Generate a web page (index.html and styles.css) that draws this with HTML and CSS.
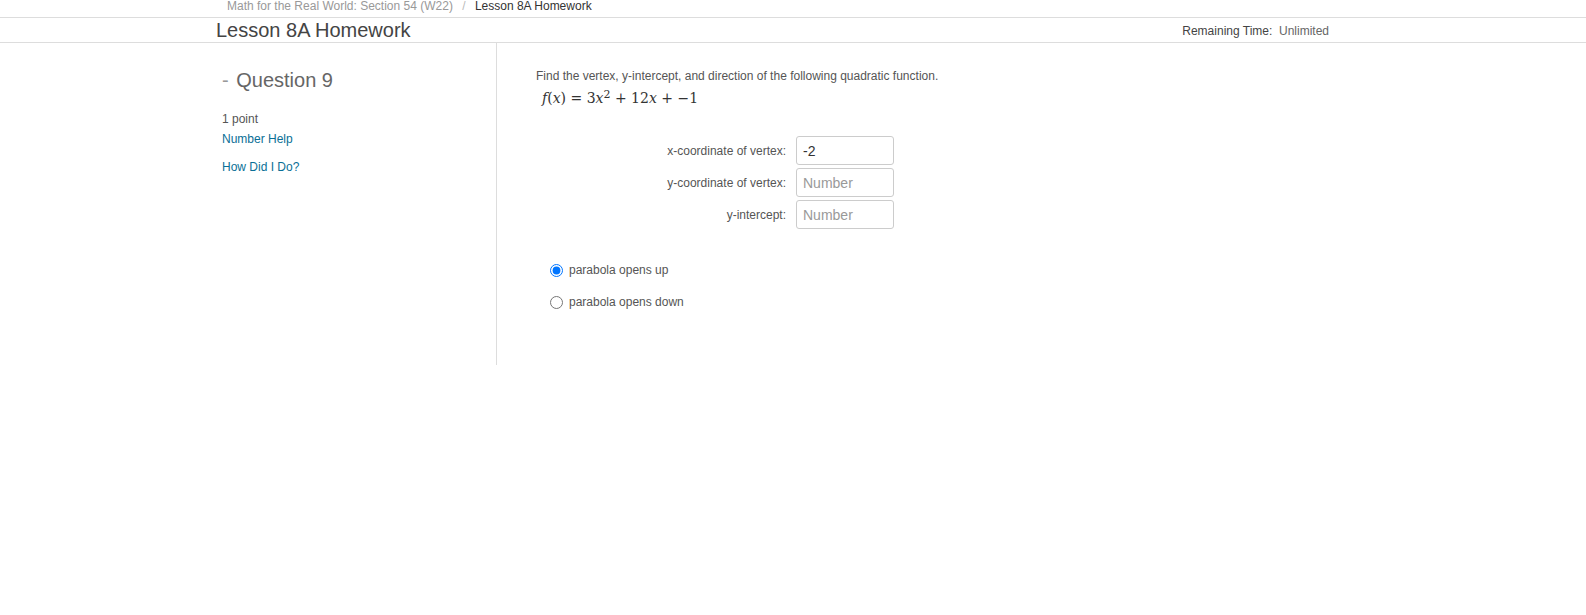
FILE: index.html
```html
<!DOCTYPE html>
<html>
  <head>
    <meta name="viewport" content="width=device-width, initial-scale=1.0" />
    <link rel="stylesheet" href="styles.css">
  </head>
  <body>
    <div class="breadcrumb">
      <span class="crumb">Math for the Real World: Section 54 (W22)</span>
      <span class="sep">/</span>
      <span class="crumb current">Lesson 8A Homework</span>
    </div>

    <div class="titlebar">
      <div class="container bar-inner">
        <h1>Lesson 8A Homework</h1>
        <div class="timer">Remaining Time:&nbsp; <span>Unlimited</span></div>
      </div>
    </div>

    <div class="container main">
      <div class="sidebar">
        <h2><span class="dash">-</span> Question 9</h2>
        <div class="points">1 point</div>
        <a class="help" href="#">Number Help</a>
        <a class="help how" href="#">How Did I Do?</a>
      </div>

      <div class="question">
        <p class="prompt">Find the vertex, y-intercept, and direction of the following quadratic function.</p>
        <div class="math">
          <i>f</i>(<i>x</i>) = 3<i>x</i><sup>2</sup> + 12<i>x</i> + &minus;1
        </div>

        <div class="fields">
          <label class="field">
            <span>x-coordinate of vertex:</span>
            <input type="text" value="-2" />
          </label>
          <label class="field">
            <span>y-coordinate of vertex:</span>
            <input type="text" placeholder="Number" />
          </label>
          <label class="field">
            <span>y-intercept:</span>
            <input type="text" placeholder="Number" />
          </label>
        </div>

        <div class="choices">
          <label class="choice">
            <input type="radio" name="dir" checked />
            parabola opens up
          </label>
          <label class="choice">
            <input type="radio" name="dir" />
            parabola opens down
          </label>
        </div>
      </div>
    </div>
  </body>
</html>
```

FILE: styles.css
```css
* {
  box-sizing: border-box;
  margin: 0;
  padding: 0;
}

body {
  font-family: "Liberation Sans", Arial, sans-serif;
  font-size: 12px;
  color: #555;
  background: white;
}

.container {
  width: 1113px;
  margin-left: 216px;
}

.breadcrumb {
  height: 17px;
  padding-left: 227px;
  line-height: 13px;
  color: #999;
}

.breadcrumb .sep {
  margin: 0 6px;
  color: #bbb;
}

.breadcrumb .current {
  color: #333;
}

.titlebar {
  border-top: 1px solid #ddd;
  border-bottom: 1px solid #ddd;
  height: 26px;
}

.bar-inner {
  display: flex;
  justify-content: space-between;
  align-items: center;
  height: 24px;
}

h1 {
  font-size: 20px;
  font-weight: normal;
  color: #444;
  line-height: 22px;
}

.timer {
  color: #444;
  padding-top: 1px;
}

.timer span {
  color: #666;
}

.main {
  display: flex;
}

.sidebar {
  width: 281px;
  height: 322px;
  border-right: 1px solid #ddd;
  padding: 26px 0 0 6px;
}

h2 {
  font-size: 20px;
  font-weight: normal;
  color: #666;
  line-height: 22px;
}

.dash {
  color: #999;
  margin-right: 2px;
}

.points {
  margin-top: 21px;
  color: #555;
}

.help {
  display: block;
  margin-top: 6px;
  color: #0a6f96;
  text-decoration: none;
}

.help.how {
  margin-top: 14px;
}

.question {
  padding: 26px 0 0 39px;
}

.prompt {
  color: #555;
  font-size: 12px;
}

.math {
  margin: 5px 0 0 6px;
  font-family: "DejaVu Serif", "Liberation Serif", serif;
  font-size: 14px;
  color: #333;
}

.math sup {
  font-size: 11px;
  vertical-align: 5px;
}

.fields {
  margin-top: 30px;
  width: 358px;
  display: flex;
  flex-direction: column;
  gap: 3px;
}

.field {
  display: flex;
  justify-content: flex-end;
  align-items: center;
  gap: 10px;
}

.field span {
  color: #555;
}

.field input {
  width: 98px;
  height: 29px;
  border: 1px solid #ccc;
  border-radius: 3px;
  padding: 0 6px;
  font-family: "Liberation Sans", Arial, sans-serif;
  font-size: 14px;
  color: #333;
}

.field input::placeholder {
  color: #999;
}

.choices {
  margin: 34px 0 0 14px;
  display: flex;
  flex-direction: column;
  gap: 18px;
}

.choice {
  display: flex;
  align-items: center;
  gap: 6px;
  color: #555;
}

.choice input {
  width: 13px;
  height: 13px;
  margin: 0;
}
```
